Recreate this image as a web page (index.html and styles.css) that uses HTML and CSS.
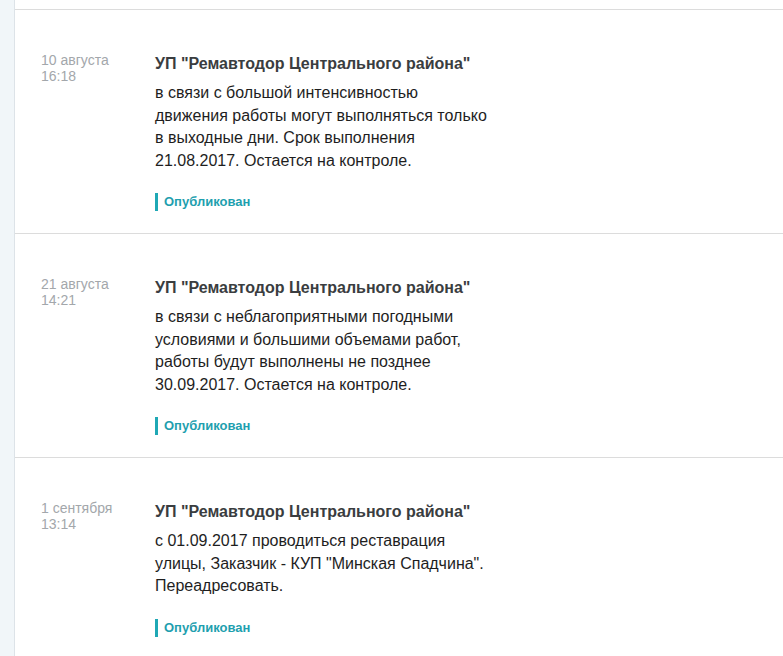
FILE: index.html
```html
<!DOCTYPE html>
<html lang="ru">
<head>
<meta charset="utf-8">
<link rel="stylesheet" href="styles.css">
</head>
<body>
<div class="page">
  <div class="side"></div>
  <div class="list">
    <div class="item">
      <div class="date">10 августа<br>16:18</div>
      <div class="content">
        <div class="org">УП "Ремавтодор Центрального района"</div>
        <div class="text">в связи с большой интенсивностью<br>движения работы могут выполняться только<br>в выходные дни. Срок выполнения<br>21.08.2017. Остается на контроле.</div>
        <div class="status">Опубликован</div>
      </div>
    </div>
    <div class="item">
      <div class="date">21 августа<br>14:21</div>
      <div class="content">
        <div class="org">УП "Ремавтодор Центрального района"</div>
        <div class="text">в связи с неблагоприятными погодными<br>условиями и большими объемами работ,<br>работы будут выполнены не позднее<br>30.09.2017. Остается на контроле.</div>
        <div class="status">Опубликован</div>
      </div>
    </div>
    <div class="item">
      <div class="date">1 сентября<br>13:14</div>
      <div class="content">
        <div class="org">УП "Ремавтодор Центрального района"</div>
        <div class="text">с 01.09.2017 проводиться реставрация<br>улицы, Заказчик - КУП "Минская Спадчина".<br>Переадресовать.</div>
        <div class="status">Опубликован</div>
      </div>
    </div>
  </div>
</div>
</body>
</html>
```

FILE: styles.css
```css
html, body {
  margin: 0;
  padding: 0;
  background: #fff;
}
body {
  font-family: "Liberation Sans", Arial, sans-serif;
  color: #2b2b2b;
}
.page {
  display: flex;
  min-height: 656px;
}
.side {
  width: 14px;
  flex: none;
  background: #f1f6f9;
  border-right: 1px solid #dde3e8;
}
.list {
  flex: 1;
  padding-top: 9px;
}
.item {
  display: flex;
  border-top: 1px solid #dcdcdc;
  height: 223px;
  box-sizing: content-box;
}
.date {
  width: 114px;
  flex: none;
  padding: 42px 0 0 26px;
  font-size: 14px;
  line-height: 16px;
  color: #a3a7ab;
}
.content {
  padding-top: 44px;
}
.org {
  font-size: 16px;
  font-weight: bold;
  color: #3a3d40;
  line-height: 20px;
}
.text {
  margin-top: 8px;
  font-size: 16px;
  line-height: 22.5px;
  color: #1e1e1e;
}
.status {
  margin-top: 21px;
  border-left: 3px solid #1fa8b5;
  padding-left: 6px;
  font-size: 13px;
  font-weight: bold;
  line-height: 18px;
  color: #1f9faf;
}
```
